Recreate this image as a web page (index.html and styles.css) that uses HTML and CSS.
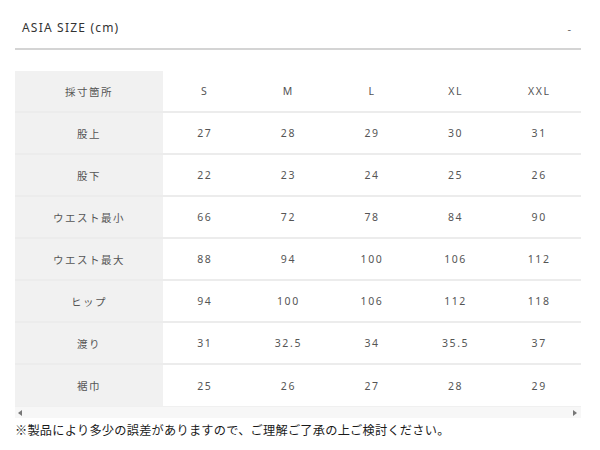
FILE: index.html
```html
<!DOCTYPE html>
<html lang="ja">
<head>
<meta charset="utf-8">
<link rel="stylesheet" href="styles.css">
</head>
<body>
<div class="page">
  <div class="head">
    <span class="title">ASIA SIZE (cm)</span>
    <span class="toggle">-</span>
  </div>
  <div class="tablewrap">
    <table class="size">
      <tr><th>採寸箇所</th><td>S</td><td>M</td><td>L</td><td>XL</td><td>XXL</td></tr>
      <tr><th>股上</th><td>27</td><td>28</td><td>29</td><td>30</td><td>31</td></tr>
      <tr><th>股下</th><td>22</td><td>23</td><td>24</td><td>25</td><td>26</td></tr>
      <tr><th>ウエスト最小</th><td>66</td><td>72</td><td>78</td><td>84</td><td>90</td></tr>
      <tr><th>ウエスト最大</th><td>88</td><td>94</td><td>100</td><td>106</td><td>112</td></tr>
      <tr><th>ヒップ</th><td>94</td><td>100</td><td>106</td><td>112</td><td>118</td></tr>
      <tr><th>渡り</th><td>31</td><td>32.5</td><td>34</td><td>35.5</td><td>37</td></tr>
      <tr class="last"><th>裾巾</th><td>25</td><td>26</td><td>27</td><td>28</td><td>29</td></tr>
    </table>
    <div class="scrollbar">
      <span class="arrow left"></span>
      <span class="arrow right"></span>
    </div>
  </div>
  <p class="note">※製品により多少の誤差がありますので、ご理解ご了承の上ご検討ください。</p>
</div>
</body>
</html>
```
FILE: styles.css
```css
html, body { margin: 0; padding: 0; background: #fff; }
body { font-family: "Noto Sans", "Noto Sans CJK JP", sans-serif; color: #444; }
.page { width: 600px; height: 450px; padding: 0 19px 0 15px; box-sizing: border-box; }
.head {
  display: flex; justify-content: space-between; align-items: center;
  height: 50px; padding: 6px 10px 0 7px;
  border-bottom: 2px solid #d4d4d4;
  box-sizing: border-box;
}
.title { font-size: 12px; letter-spacing: 1.2px; color: #333; }
.toggle { font-size: 11px; color: #666; padding-top: 3px; }
.tablewrap { margin-top: 21px; }
.size { width: 100%; border-collapse: collapse; table-layout: fixed; }
.size th, .size td {
  height: 40px; border-bottom: 2px solid #ececec;
  font-size: 10.5px; font-weight: normal; letter-spacing: 1.6px;
  color: #555; text-align: center; padding: 0;
}
.size th { width: 148px; background: #f1f1f1; letter-spacing: 1.5px; }
.size tr.last th, .size tr.last td { border-bottom: 1px solid #f0f0f0; height: 41px; }
.scrollbar {
  height: 11px; background: #f7f7f7;
  display: flex; justify-content: space-between; align-items: center;
  padding: 0 4px 0 3px;
}
.arrow { width: 0; height: 0; border-top: 3px solid transparent; border-bottom: 3px solid transparent; }
.arrow.left { border-right: 4px solid #777; }
.arrow.right { border-left: 4px solid #777; }
.note {
  margin: 3px 0 0; font-size: 12.2px; color: #1a1a1a;
  font-family: "Noto Sans CJK JP", sans-serif; letter-spacing: 0.25px;
  line-height: 18px;
}
```
